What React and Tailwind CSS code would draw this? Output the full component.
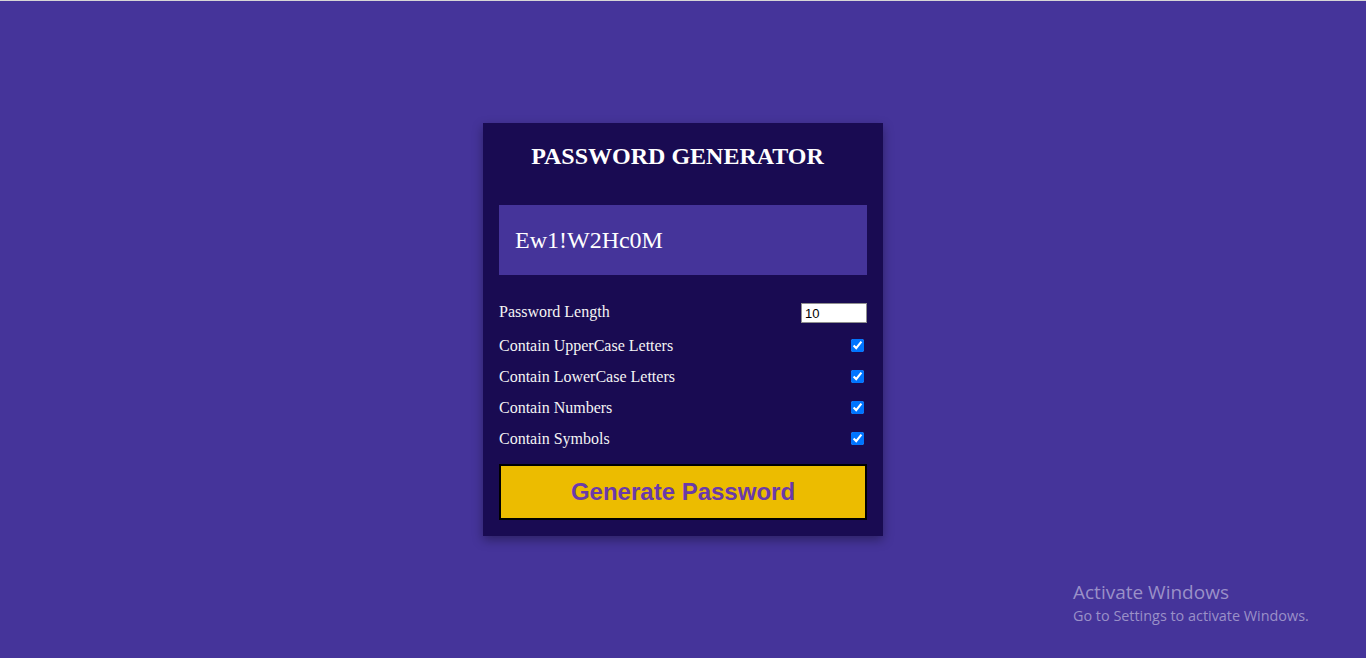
import { useState } from 'react';

const options = [
  { key: 'upper', label: 'Contain UpperCase Letters' },
  { key: 'lower', label: 'Contain LowerCase Letters' },
  { key: 'numbers', label: 'Contain Numbers' },
  { key: 'symbols', label: 'Contain Symbols' },
];

const sets = {
  upper: 'ABCDEFGHIJKLMNOPQRSTUVWXYZ',
  lower: 'abcdefghijklmnopqrstuvwxyz',
  numbers: '0123456789',
  symbols: '!@#$%^&*()_+=-',
};

export default function App() {
  const [length, setLength] = useState(10);
  const [checked, setChecked] = useState({ upper: true, lower: true, numbers: true, symbols: true });
  const [password, setPassword] = useState('Ew1!W2Hc0M');

  const generate = () => {
    const pool = Object.keys(sets).filter((k) => checked[k]).map((k) => sets[k]).join('');
    if (!pool) return setPassword('');
    let out = '';
    for (let i = 0; i < length; i++) out += pool[Math.floor(Math.random() * pool.length)];
    setPassword(out);
  };

  return (
    <div className="relative flex min-h-screen items-center justify-center border-t border-[#d6d6d6] bg-[#45349a] font-['Liberation_Serif',serif]">
      <div className="w-[400px] bg-[#190b52] p-4 shadow-[0_4px_10px_rgba(0,0,0,0.35)]">
        <div className="mb-8 flex h-[34px] items-center justify-center pr-[11px]">
          <h2 className="text-[24px] font-bold text-white">PASSWORD GENERATOR</h2>
        </div>

        <div className="flex h-[70px] items-center bg-[#45349a] px-4 text-[24px] text-white">
          {password}
        </div>

        <div className="mt-[21px] flex h-[34px] items-center justify-between text-[16px] text-[#f4f4f4]">
          <label className="-mt-[2px]">Password Length</label>
          <input
            type="number"
            value={length}
            min={4}
            max={20}
            onChange={(e) => setLength(Number(e.target.value))}
            className="h-[20px] w-[66px] border border-[#8f8f8f] bg-white px-[3px] font-['Liberation_Sans',sans-serif] text-[13px] text-black"
          />
        </div>

        {options.map((o) => (
          <div key={o.key} className="flex h-[31px] items-center justify-between text-[16px] text-[#f4f4f4]">
            <label htmlFor={o.key}>{o.label}</label>
            <input
              id={o.key}
              type="checkbox"
              checked={checked[o.key]}
              onChange={() => setChecked((c) => ({ ...c, [o.key]: !c[o.key] }))}
              className="mr-[3px] h-[13px] w-[13px]"
            />
          </div>
        ))}

        <button
          type="button"
          onClick={generate}
          className="mt-[10px] h-[56px] w-full border-2 border-black bg-[#ecbc00] font-['Liberation_Sans',sans-serif] text-[24px] font-bold text-[#6a3aaa]"
        >
          Generate Password
        </button>
      </div>

      <div className="pointer-events-none absolute left-[1073px] top-[579px] font-['Open_Sans',sans-serif] text-[#9a90c8]">
        <div className="text-[19px] leading-[24px]">Activate Windows</div>
        <div className="text-[14.4px] leading-[24px]">Go to Settings to activate Windows.</div>
      </div>
    </div>
  );
}
